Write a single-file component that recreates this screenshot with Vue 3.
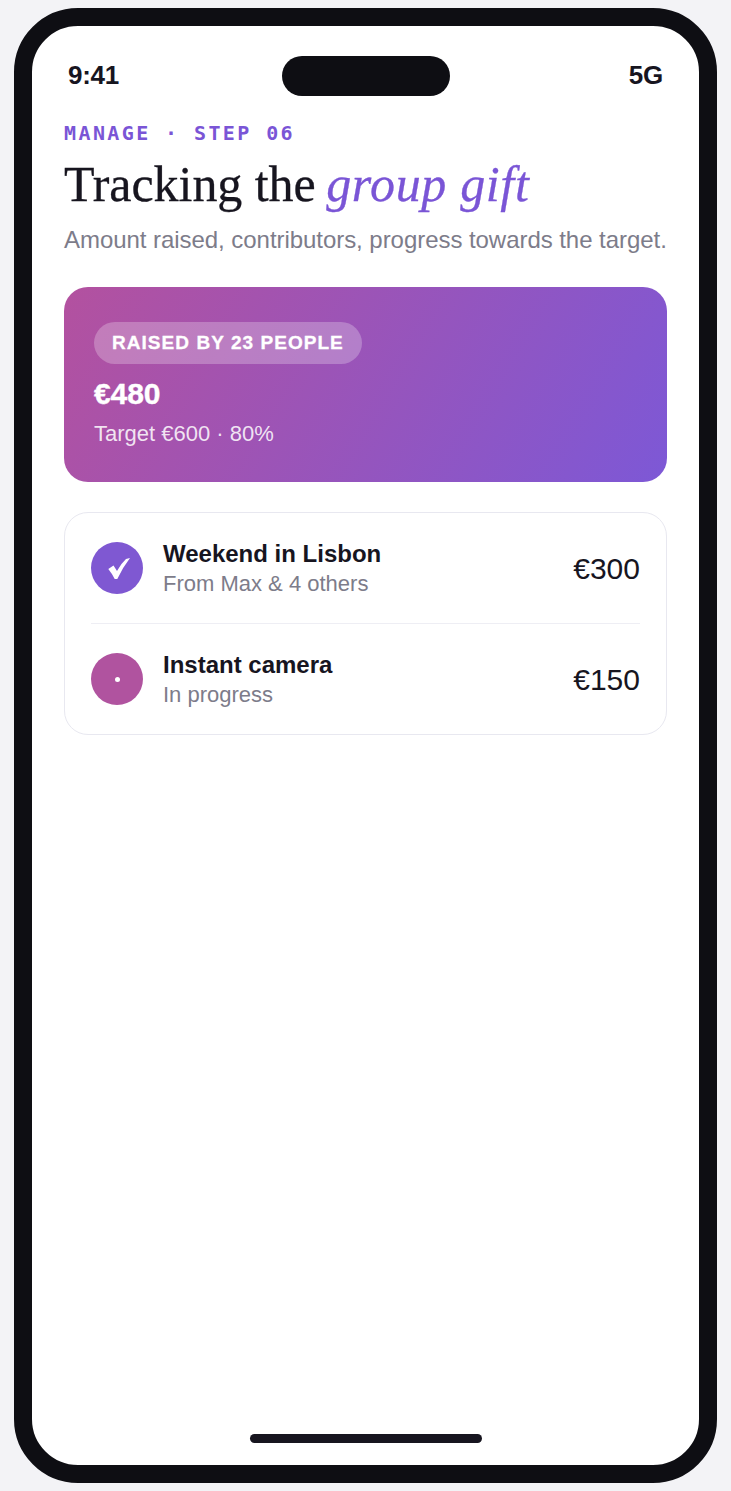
<template>
  <div class="page">
    <div class="phone">
      <div class="screen">
        <div class="island"></div>
        <div class="status">
          <span>9:41</span>
          <span>5G</span>
        </div>
        <div class="content">
          <div class="eyebrow">MANAGE · STEP 06</div>
          <h1 class="title">Tracking the <em>group gift</em></h1>
          <p class="lead">Amount raised, contributors, progress towards the target.</p>

          <div class="hero">
            <span class="pill">RAISED BY 23 PEOPLE</span>
            <div class="amount">€480</div>
            <div class="target">Target €600 · 80%</div>
          </div>

          <div class="list">
            <div v-for="item in items" :key="item.name" class="row">
              <div class="icon" :class="item.kind">
                <svg v-if="item.kind === 'done'" class="check" width="22" height="22" viewBox="0 0 22 22">
                  <path d="M0.3 11 L5.5 7.5 L9 13 Q13 5.5 18 1 L22 0 Q15 9 9.3 21 L6.7 21 Q4 15.5 0.3 11 Z" fill="#fff" />
                </svg>
                <span v-else class="dot"></span>
              </div>
              <div class="info">
                <div class="name">{{ item.name }}</div>
                <div class="sub">{{ item.sub }}</div>
              </div>
              <div class="price">{{ item.price }}</div>
            </div>
          </div>
        </div>
        <div class="home"></div>
      </div>
    </div>
  </div>
</template>

<script setup>
const items = [
  { name: 'Weekend in Lisbon', sub: 'From Max & 4 others', price: '€300', kind: 'done' },
  { name: 'Instant camera', sub: 'In progress', price: '€150', kind: 'progress' }
];
</script>

<style>
html, body {
  margin: 0;
  background: #f3f3f6;
}
</style>

<style scoped>
.page {
  width: 731px;
  height: 1491px;
  box-sizing: border-box;
  padding: 8px 14px;
  background: #f3f3f6;
  font-family: "Liberation Sans", Arial, sans-serif;
  color: #17151f;
}

.phone {
  height: 1475px;
  box-sizing: border-box;
  border: 18px solid #0e0e13;
  border-radius: 64px;
  background: #fff;
}

.screen {
  position: relative;
  height: 100%;
  display: flex;
  flex-direction: column;
}

.island {
  position: absolute;
  top: 30px;
  left: 250px;
  width: 168px;
  height: 40px;
  border-radius: 20px;
  background: #0e0e13;
}

.status {
  display: flex;
  justify-content: space-between;
  padding: 34px 36px 0;
  font-size: 26px;
  line-height: 30px;
  font-weight: 700;
  letter-spacing: -0.26px;
}

.content {
  flex: 1;
  display: flex;
  flex-direction: column;
  padding: 0 32px;
}

.eyebrow {
  margin-top: 31px;
  font-family: "DejaVu Sans Mono", monospace;
  font-size: 20px;
  line-height: 24px;
  font-weight: 700;
  letter-spacing: 2.4px;
  color: #7a55d6;
}

.title {
  margin: 14px 0 0;
  font-family: "Liberation Serif", serif;
  font-size: 50px;
  line-height: 50px;
  font-weight: 400;
  letter-spacing: -0.05px;
  -webkit-text-stroke: 0.3px currentColor;
  color: #17151f;
}

.title em {
  margin-left: -2px;
  font-style: italic;
  letter-spacing: 0.65px;
  color: #7a55d6;
}

.lead {
  margin: 15px 0 0;
  font-size: 24px;
  line-height: 32px;
  letter-spacing: -0.05px;
  color: #7d7c8a;
  white-space: nowrap;
}

.hero {
  margin-top: 31px;
  height: 195px;
  box-sizing: border-box;
  padding: 35px 30px 0;
  border-radius: 24px;
  background: linear-gradient(120deg, #b3519f 0%, #7d58d6 100%);
  color: #fff;
}

.pill {
  display: inline-block;
  padding: 0 18px;
  height: 42px;
  line-height: 42px;
  border-radius: 21px;
  background: rgba(255, 255, 255, 0.25);
  font-size: 19px;
  font-weight: 700;
  letter-spacing: 1.05px;
  -webkit-text-stroke: 0.3px currentColor;
}

.amount {
  margin-top: 10px;
  font-size: 30px;
  line-height: 40px;
  font-weight: 700;
  letter-spacing: -0.1px;
  -webkit-text-stroke: 0.4px currentColor;
}

.target {
  margin-top: 5px;
  font-size: 22px;
  line-height: 30px;
  color: rgba(255, 255, 255, 0.85);
}

.list {
  margin-top: 30px;
  box-sizing: border-box;
  padding: 0 26px;
  border: 1px solid #e8e8f0;
  border-radius: 24px;
}

.row {
  display: flex;
  align-items: center;
  gap: 20px;
  height: 110px;
}

.row + .row {
  border-top: 1px solid #eeeef4;
}

.icon {
  width: 52px;
  height: 52px;
  border-radius: 50%;
  display: flex;
  align-items: center;
  justify-content: center;
  flex: none;
}

.icon.done {
  background: #7f58d2;
}

.icon.progress {
  background: #b0539f;
}

.check {
  margin: 2px 0 0 4px;
}

.dot {
  width: 5px;
  height: 5px;
  border-radius: 50%;
  background: #fff;
}

.info {
  flex: 1;
  padding-top: 2px;
}

.name {
  font-size: 24px;
  line-height: 30px;
  font-weight: 700;
}

.sub {
  font-size: 22px;
  line-height: 30px;
  color: #7d7c8a;
}

.price {
  padding-top: 2px;
  font-size: 30px;
  line-height: 36px;
}

.home {
  position: absolute;
  bottom: 22px;
  left: 218px;
  width: 232px;
  height: 9px;
  border-radius: 5px;
  background: #17151f;
}
</style>
